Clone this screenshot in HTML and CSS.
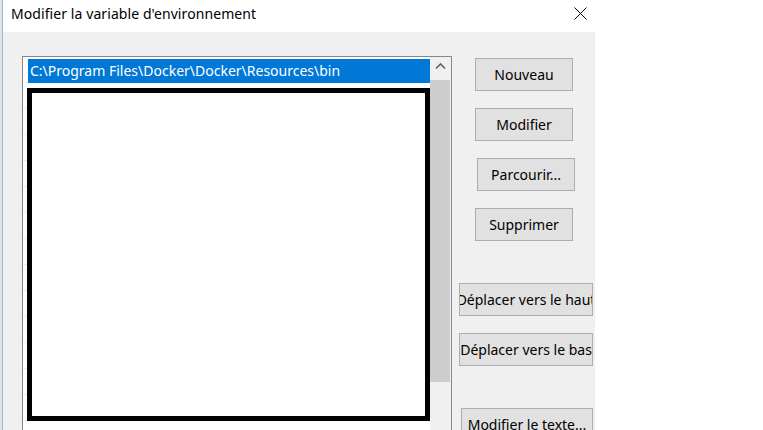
FILE: index.html
```html
<!DOCTYPE html>
<html lang="fr">
<head>
<meta charset="utf-8">
<title>Modifier la variable d'environnement</title>
<link rel="stylesheet" href="styles.css">
</head>
<body>
<div class="screen">
  <div class="edge"></div>
  <div class="main">
    <div class="titlebar">
      <span class="title">Modifier la variable d'environnement</span>
      <svg class="close" width="13" height="13" viewBox="0 0 13 13" aria-hidden="true">
        <path d="M0.5 0.5 L12.5 12.5 M12.5 0.5 L0.5 12.5" stroke="#000" stroke-width="1" fill="none"/>
      </svg>
    </div>
    <div class="dialog">
      <div class="listbox">
        <div class="list-items">
          <div class="item selected">C:\Program Files\Docker\Docker\Resources\bin</div>
          <div class="redact"></div>
        </div>
        <div class="scrollbar">
          <div class="arrow">
            <svg width="11" height="7" viewBox="0 0 11 7" aria-hidden="true">
              <path d="M1 5.5 L5.5 1 L10 5.5" stroke="#606060" stroke-width="1.6" fill="none"/>
            </svg>
          </div>
          <div class="thumb"></div>
        </div>
      </div>
      <div class="buttons">
        <div class="btn btn-small btn-first">Nouveau</div>
        <div class="btn btn-small">Modifier</div>
        <div class="btn btn-small btn-shift">Parcourir...</div>
        <div class="btn btn-small">Supprimer</div>
        <div class="btn btn-wide btn-group">Déplacer vers le haut</div>
        <div class="btn btn-wide">Déplacer vers le bas</div>
        <div class="btn btn-wide btn-group btn-last">Modifier le texte...</div>
      </div>
    </div>
  </div>
</div>
</body>
</html>
```

FILE: styles.css
```css
* { box-sizing: border-box; }
html, body {
  margin: 0;
  padding: 0;
  background: #ffffff;
}
body {
  font-family: "Noto Sans", "Open Sans", sans-serif;
  font-size: 14px;
  color: #000;
}
.screen {
  display: flex;
  width: 763px;
  height: 430px;
  overflow: hidden;
}
.edge {
  width: 3px;
  flex: none;
  background: #e4e4e4;
  border-right: 1px solid #8fbde0;
}
.main {
  display: flex;
  flex-direction: column;
  flex: none;
  width: 592px;
}
.titlebar {
  height: 32px;
  flex: none;
  background: #fff;
  display: flex;
  align-items: center;
  padding-left: 8px;
  padding-right: 8px;
}
.title {
  font-size: 14px;
  line-height: 20px;
  margin-top: -4px;
  letter-spacing: 0.08px;
}
.close {
  margin-left: auto;
  margin-top: -5px;
}
.dialog {
  flex: 1;
  background: #f0f0f0;
  display: flex;
  align-items: flex-start;
  padding: 24px 0 0 19px;
  overflow: hidden;
}
.listbox {
  width: 430px;
  height: 390px;
  flex: none;
  border: 1px solid #828790;
  background: #fff;
  display: flex;
}
.list-items {
  flex: 1;
  padding: 2px 0 0 4px;
  background-image: repeating-linear-gradient(to bottom, transparent 0, transparent 25px, #ececec 25px, #ececec 26px);
  background-position: 0 0;
}
.item {
  height: 24px;
  width: 402px;
  margin-left: 1px;
  padding-left: 2px;
  line-height: 23px;
  white-space: nowrap;
  font-size: 14px;
}
.item.selected {
  background: #0078d7;
  color: #fff;
}
.redact {
  width: 403px;
  height: 333px;
  margin-top: 5px;
  border: 5px solid #000;
  background: #fff;
}
.scrollbar {
  width: 21px;
  flex: none;
  background: #f0f0f0;
  display: flex;
  flex-direction: column;
  align-items: flex-start;
}
.arrow {
  width: 20px;
  height: 23px;
  display: flex;
  align-items: center;
  justify-content: center;
  padding-bottom: 4px;
}
.thumb {
  width: 20px;
  height: 302px;
  background: #cdcdcd;
}
.buttons {
  flex: none;
  width: 134px;
  margin-left: 7px;
  display: flex;
  flex-direction: column;
  align-items: flex-start;
}
.btn {
  height: 33px;
  flex: none;
  border: 1px solid #adadad;
  background: #e1e1e1;
  display: flex;
  align-items: center;
  justify-content: center;
  white-space: nowrap;
  overflow: hidden;
  font-size: 14px;
  margin-top: 17px;
}
.btn-small {
  width: 98px;
  margin-left: 16px;
}
.btn-shift {
  margin-left: 18px;
}
.btn-first {
  margin-top: 2px;
}
.btn-wide {
  width: 134px;
}
.btn-group {
  margin-top: 42px;
}
.btn-last {
  width: 132px;
  margin-left: 2px;
}
```
